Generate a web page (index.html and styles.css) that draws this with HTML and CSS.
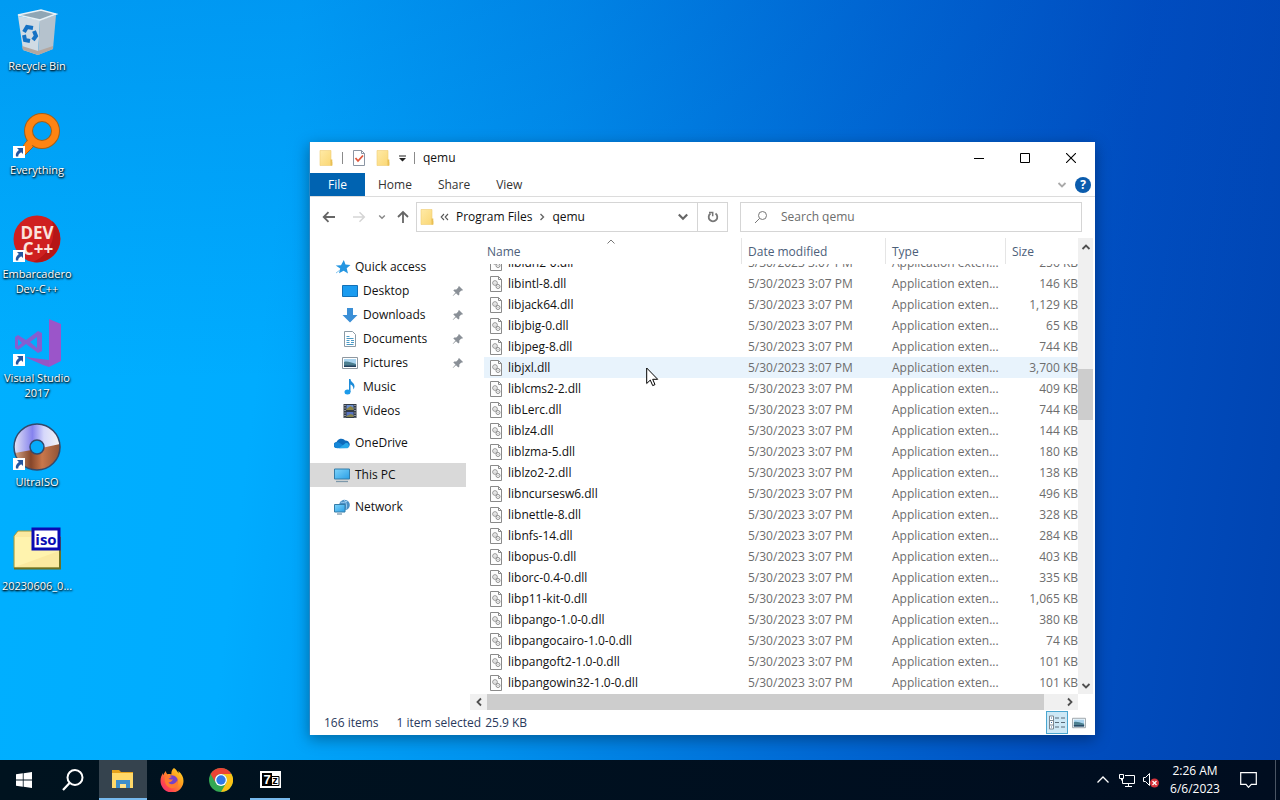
FILE: index.html
```html
<!DOCTYPE html>
<html lang="en">
<head>
  <meta charset="UTF-8">
  <meta name="viewport" content="width=device-width, initial-scale=1.0">
  <title>Desktop</title>
  <link rel="stylesheet" href="styles.css">
</head>
<body>
  <!-- Shared icons -->
  <svg class="sprite" aria-hidden="true">
    <defs>
      <linearGradient id="folder-fill" x1="0" y1="0" x2="1" y2="1">
        <stop offset="0" stop-color="#ffeaa6"/>
        <stop offset="1" stop-color="#fad672"/>
      </linearGradient>
      <linearGradient id="screen-fill" x1="0" y1="0" x2="1" y2="1">
        <stop offset="0" stop-color="#7fd4fb"/>
        <stop offset="1" stop-color="#2a9fe6"/>
      </linearGradient>
    </defs>
    <symbol id="folder" viewBox="0 0 16 16">
      <path d="M2 0.500h11v11l1 1v3H2z" fill="url(#folder-fill)" stroke="#f0cd74" stroke-width=".6"/>
      <path d="M12.500 9.500v6h1.800v-6z" fill="#e8bf55"/>
    </symbol>
    <symbol id="dll" viewBox="0 0 14 16">
      <path d="M1.500 .5h8l3 3v12h-11z" fill="#fdfdfd" stroke="#8a8a8a"/>
      <path d="M9.500 .5v3h3" fill="none" stroke="#8a8a8a"/>
      <circle cx="6" cy="7" r="2.300" fill="none" stroke="#8f8f8f"/>
      <circle cx="6" cy="7" r=".6" fill="#888"/>
      <circle cx="9" cy="10.500" r="2" fill="none" stroke="#8f8f8f"/>
      <circle cx="9" cy="10.500" r=".5" fill="#888"/>
    </symbol>
    <symbol id="pin" viewBox="0 0 12 12">
      <path d="M7 1l4 4-1 .8-.7-.2-2 2 .1 2-1 1L4 8.200 1 11l-.3-.3L3.500 7.600 1.300 5.400l1-1 2 .2 2-2L6.200 1.900z" fill="#8a9097"/>
    </symbol>
    <symbol id="down" viewBox="0 0 10 10">
      <path d="M1.500 3L5 6.500 8.500 3" fill="none" stroke="currentColor" stroke-width="1.800"/>
    </symbol>
    <symbol id="shortcut" viewBox="0 0 12 12">
      <path d="M0 0h12v12H0z" fill="#fff"/>
      <path d="M4 2h6v6L8.200 6.200C6 7.500 5 9 5.300 10.500H3C2.300 8 3.500 5.800 5.900 3.900z" fill="#2456a0"/>
    </symbol>
    <symbol id="picture" viewBox="0 0 16 14">
      <path d="M.5 1.500h15v11H.5z" fill="#fff" stroke="#8f98a0"/>
      <path d="M2 3h12v8H2z" fill="#a9d4ef"/>
      <path d="M2 6c3-1 6 0 12 2v3H2z" fill="#4d7f90"/>
      <path d="M2 9.500h12V11H2z" fill="#24415e"/>
    </symbol>
  </svg>

  <main class="desktop">
    <div class="shortcuts">
      <button class="shortcut">
        <svg class="shortcut-icon" viewBox="0 0 48 48">
          <path d="M5 9l22 4-2 35-15-5z" fill="#cfdbe4"/>
          <path d="M27 13l16-5-3 34-15 6z" fill="#b5c2cd"/>
          <path d="M5 8l23-5 15 4-16 6z" fill="#8fa6b5" stroke="#e8f1f6" stroke-width="1.500"/>
          <path d="M9 39l16 5 15-5v3l-15 6-15-5z" fill="#b3a7a0"/>
          <g fill="none" stroke="#1572c4" stroke-width="4">
            <path d="M11 25l3-5 6 1"/>
            <path d="M21 24l2 5-3 4"/>
            <path d="M17 34l-5-1-1-5"/>
          </g>
        </svg>
        <span>Recycle Bin</span>
      </button>
      <button class="shortcut">
        <svg class="shortcut-icon" viewBox="0 0 48 48">
          <path d="M16 27L5 42l5 4 14-14z" fill="#ff8412" stroke="#a0601c"/>
          <circle cx="29" cy="20" r="13.500" fill="none" stroke="#a0601c" stroke-width="9"/>
          <circle cx="29" cy="20" r="13.500" fill="none" stroke="#ff8412" stroke-width="7"/>
          <path d="M17 27l5 5-7 6-4-4z" fill="#ff8412"/>
          <use href="#shortcut" x="0" y="35" width="12" height="12"/>
        </svg>
        <span>Everything</span>
      </button>
      <button class="shortcut">
        <svg class="shortcut-icon" viewBox="0 0 48 48">
          <circle cx="24" cy="24" r="23.500" fill="#cf2020"/>
          <path d="M39 6a23.500 23.500 0 0 1-19 41C36 40 44 24 39 6z" fill="#b51616"/>
          <text class="dev-text" x="24" y="24">DEV</text>
          <text class="dev-text" x="25" y="40">C++</text>
          <use href="#shortcut" x="0" y="35" width="12" height="12"/>
        </svg>
        <span>Embarcadero Dev-C++</span>
      </button>
      <button class="shortcut">
        <svg class="shortcut-icon" viewBox="0 0 48 48">
          <path d="M36 0l12 5v37l-12 6z" fill="#9b55c9"/>
          <path d="M12 38l24 3v7l-6-2z" fill="#9556c5"/>
          <path d="M2 18l3-2 8 5 12-9 4 2v18l-4 2-12-9-8 6-3-2zM5 20v7l4-3zM24 18l-7 5 7 6z" fill="#855ed0" fill-rule="evenodd"/>
          <use href="#shortcut" x="0" y="35" width="12" height="12"/>
        </svg>
        <span>Visual Studio 2017</span>
      </button>
      <button class="shortcut">
        <svg class="shortcut-icon" viewBox="0 0 48 48">
          <defs>
            <linearGradient id="disc-top" x1="0" y1="0" x2="1" y2="0">
              <stop offset="0" stop-color="#e4e4f5"/>
              <stop offset=".4" stop-color="#8582ee"/>
              <stop offset=".65" stop-color="#d6d8fb"/>
              <stop offset="1" stop-color="#f4f4f4"/>
            </linearGradient>
            <linearGradient id="disc-bottom" x1="0" y1="0" x2="1" y2="0">
              <stop offset="0" stop-color="#d3a384"/>
              <stop offset=".35" stop-color="#86462a"/>
              <stop offset=".6" stop-color="#c9774b"/>
              <stop offset="1" stop-color="#8f5337"/>
            </linearGradient>
          </defs>
          <circle cx="24" cy="24" r="23" fill="url(#disc-top)"/>
          <path d="M2 30l22-4 23-5a23 23 0 0 1-45 9z" fill="url(#disc-bottom)"/>
          <circle cx="24" cy="24" r="23" fill="none" stroke="#33496b" stroke-width="1.500"/>
          <circle cx="24" cy="24" r="7" fill="#05abfb" stroke="#33496b" stroke-width="1.500"/>
          <use href="#shortcut" x="0" y="35" width="12" height="12"/>
        </svg>
        <span>UltraISO</span>
      </button>
      <button class="shortcut">
        <svg class="shortcut-icon" viewBox="0 0 48 48">
          <path d="M1 9l4-5h14l3 5h25v32H1z" fill="#fbe9a0" stroke="#a39a3c"/>
          <path d="M2 10h44v14L2 40z" fill="#fff3ae"/>
          <path d="M47 10v31.500H1" fill="none" stroke="#6c7024" stroke-width="2"/>
          <path d="M20 2h26v20H20z" fill="#fff" stroke="#0a0ab4" stroke-width="3"/>
          <text class="iso-text" x="33" y="18">iso</text>
        </svg>
        <span>20230606_0...</span>
      </button>
    </div>

    <section class="window">
      <header class="title-bar">
        <svg class="icon" viewBox="0 0 16 16"><use href="#folder"/></svg>
        <i class="divider"></i>
        <svg class="icon" viewBox="0 0 16 16">
          <path d="M2.500 .5h8l3 3v12h-11z" fill="#fff" stroke="#8b95a3"/>
          <path d="M10.500 .5v3h3" fill="none" stroke="#8b95a3"/>
          <path d="M4.500 8l2.500 3L12 5.500" fill="none" stroke="#e0563c" stroke-width="1.800"/>
        </svg>
        <svg class="icon" viewBox="0 0 16 16"><use href="#folder"/></svg>
        <button class="customize" aria-label="Customize toolbar">
          <svg width="8" height="8" viewBox="0 0 8 8"><path d="M0 1h8v1.200H0zM0 4h8L4 8z" fill="#222"/></svg>
        </button>
        <i class="divider"></i>
        <h1>qemu</h1>
        <div class="window-controls">
          <button aria-label="Minimize"><svg width="10" height="10" viewBox="0 0 10 10"><path d="M0 5.500h10" stroke="#000"/></svg></button>
          <button aria-label="Maximize"><svg width="10" height="10" viewBox="0 0 10 10"><path d="M.5 .5h9v9h-9z" fill="none" stroke="#000"/></svg></button>
          <button aria-label="Close"><svg width="10" height="10" viewBox="0 0 10 10"><path d="M0 0l10 10M10 0L0 10" stroke="#000" stroke-width="1.100"/></svg></button>
        </div>
      </header>

      <nav class="ribbon">
        <button class="file">File</button>
        <button>Home</button>
        <button>Share</button>
        <button>View</button>
        <div class="ribbon-end">
          <button aria-label="Expand ribbon"><svg width="10" height="10"><use href="#down"/></svg></button>
          <button class="help" aria-label="Help">?</button>
        </div>
      </nav>

      <div class="address-row">
        <div class="history">
          <button aria-label="Back"><svg width="14" height="12" viewBox="0 0 14 12"><path d="M13 6H2M6.500 1.200L1.700 6l4.800 4.800" fill="none" stroke="#666" stroke-width="1.800"/></svg></button>
          <button class="forward" aria-label="Forward"><svg width="14" height="12" viewBox="0 0 14 12"><path d="M1 6h11M7.500 1.200L12.300 6l-4.800 4.800" fill="none" stroke="#d5d5d5" stroke-width="1.500"/></svg></button>
          <button class="recent" aria-label="Recent locations"><svg width="8" height="8"><use href="#down"/></svg></button>
          <button class="up" aria-label="Up"><svg width="12" height="14" viewBox="0 0 12 14"><path d="M6 13V2M1 7l5-5 5 5" fill="none" stroke="#666" stroke-width="1.800"/></svg></button>
        </div>
        <div class="address">
          <svg class="icon" viewBox="0 0 16 16"><use href="#folder"/></svg>
          <svg class="crumb-more" width="9" height="8" viewBox="0 0 9 8"><path d="M4 1L1.200 4 4 7M8 1L5.200 4 8 7" fill="none" stroke="#555" stroke-width="1.100"/></svg>
          <button>Program Files</button>
          <svg width="6" height="8" viewBox="0 0 6 8"><path d="M1.500 1L4.500 4l-3 3" fill="none" stroke="#666" stroke-width="1.400"/></svg>
          <button>qemu</button>
          <button class="address-drop" aria-label="Previous locations"><svg width="12" height="12"><use href="#down"/></svg></button>
          <button class="refresh" aria-label="Refresh">
            <svg width="12" height="12" viewBox="0 0 12 12"><path d="M3.500 2.600A4.300 4.300 0 1 0 8.500 2.600" fill="none" stroke="#777" stroke-width="1.800"/><path d="M2 1.500h3.700v3.700" fill="none" stroke="#777" stroke-width="1.500"/></svg>
          </button>
        </div>
        <label class="search">
          <svg width="14" height="14" viewBox="0 0 14 14"><circle cx="8.500" cy="5.500" r="4" fill="none" stroke="#777"/><path d="M5.500 8.500L1 13" stroke="#777"/></svg>
          <input type="search" placeholder="Search qemu" aria-label="Search qemu">
        </label>
      </div>

      <div class="content">
        <nav class="places">
          <a href="#"><svg class="icon" viewBox="0 0 16 16"><path d="M8.800 1l1.700 4.500 5 .4-3.800 3.300 1.300 5.200-4.400-2.700-4.600 2.600 1.200-4.700-4.500-3 5.300-.4z" fill="#2596e1"/><path d="M1 14l4-3" stroke="#84c6f0"/></svg>Quick access</a>
          <a class="sub" href="#"><svg class="icon" viewBox="0 0 16 16"><path d="M.5 2.500h15v11H.5z" fill="#1b9cf0" stroke="#1271b8"/></svg>Desktop<svg class="pin"><use href="#pin"/></svg></a>
          <a class="sub" href="#"><svg class="icon" viewBox="0 0 16 16"><path d="M5 1h6v7h4.500L8 15.500.5 8H5z" fill="#3b8fd6"/></svg>Downloads<svg class="pin"><use href="#pin"/></svg></a>
          <a class="sub" href="#"><svg class="icon" viewBox="0 0 16 16"><path d="M2.500 .5h8l3 3v12h-11z" fill="#fff" stroke="#8b9aa5"/><path d="M4.500 5.500h3M4.500 7.500h7M4.500 9.500h3M9 9.500h3M4.500 11.500h3M9 11.500h3M4.500 13.500h7" stroke="#4c9ac5"/></svg>Documents<svg class="pin"><use href="#pin"/></svg></a>
          <a class="sub" href="#"><svg class="icon"><use href="#picture" y="1" width="16" height="14"/></svg>Pictures<svg class="pin"><use href="#pin"/></svg></a>
          <a class="sub" href="#"><svg class="icon" viewBox="0 0 16 16"><path d="M7 0h1.500c0 3 4 3.500 4 7.500 0 1-.5 2-1 3C11.500 7.500 10 6 8.500 5.500V13H7z" fill="#1c8bd8"/><ellipse cx="5.500" cy="13" rx="3" ry="2.500" fill="#1c9bea"/></svg>Music</a>
          <a class="sub" href="#"><svg class="icon" viewBox="0 0 16 16"><path d="M1.500 1h13v14h-13z" fill="#333b46"/><path d="M4.500 2h7v5h-7z" fill="#6c8fd0"/><path d="M4.500 6l4-3 3 2v2h-7z" fill="#8d8545"/><path d="M4.500 9h7v5h-7z" fill="#5873c0"/><path d="M4.500 13l4-2 3 1v2h-7z" fill="#85834a"/><path d="M3 2v13M13 2v13" stroke="#dfe3e8" stroke-dasharray="1 1.500"/></svg>Videos</a>
          <a class="drive" href="#"><svg class="icon" viewBox="0 0 16 16"><path d="M3 13a3 3 0 0 1-.5-6A5 5 0 0 1 11 5.500 4 4 0 0 1 13.500 13z" fill="#0f6cbc"/><path d="M3 13.300A3 3 0 0 1 2 7.500c2-1 4 0 10 5.500z" fill="#1587d8"/><path d="M5 13.300l7-5.600a3 3 0 0 1 1.500 5.600z" fill="#28a8ea"/></svg>OneDrive</a>
          <a class="drive selected" href="#"><svg class="icon" viewBox="0 0 16 16"><path d="M.5 2h15v10H.5z" fill="url(#screen-fill)" stroke="#357ca8"/><path d="M2 14.500h12" stroke="#7d98aa" stroke-width="1.300"/></svg>This PC</a>
          <a class="drive" href="#"><svg class="icon" viewBox="0 0 16 16"><circle cx="10.500" cy="6" r="5.300" fill="#4a8fc4"/><path d="M6.500 3c3 1 5 0 7-1M10 .8c3 3 3 7 2 10" fill="none" stroke="#9fd0f2"/><path d="M.5 5.500h10.500V13H.5z" fill="url(#screen-fill)" stroke="#357ca8"/><path d="M3 15h5" stroke="#7d98aa" stroke-width="1.300"/></svg>Network</a>
        </nav>

        <div class="files">
          <div class="file-list">
            <table>
              <thead>
                <tr>
                  <th class="name">Name<svg class="sort" width="8" height="5" viewBox="0 0 8 5"><path d="M.5 4.500L4 1l3.500 3.500" fill="none" stroke="#777"/></svg></th>
                  <th class="date">Date modified</th>
                  <th class="type">Type</th>
                  <th class="size">Size</th>
                </tr>
              </thead>
              <tbody id="rows"></tbody>
            </table>
          </div>
          <div class="scroll-y">
            <button aria-label="Scroll up"><svg class="flip" width="10" height="10"><use href="#down"/></svg></button>
            <div class="track"><div class="thumb"></div></div>
            <button aria-label="Scroll down"><svg width="10" height="10"><use href="#down"/></svg></button>
          </div>
          <div class="scroll-x">
            <button aria-label="Scroll left"><svg class="turn-left" width="10" height="10"><use href="#down"/></svg></button>
            <div class="track"><div class="thumb"></div></div>
            <button aria-label="Scroll right"><svg class="turn-right" width="10" height="10"><use href="#down"/></svg></button>
          </div>
        </div>
      </div>

      <footer class="status-bar">
        <span class="total">166 items</span>
        <span class="chosen">1 item selected</span>
        <span>25.9 KB</span>
        <div class="views">
          <button class="active" aria-label="Details view">
            <svg width="16" height="14" viewBox="0 0 16 14"><path d="M.5 .5h4v13h-4zM.5 5h4M.5 9.500h4" fill="#fff" stroke="#7d8790"/><path d="M2 2.500h1M2 7h1M2 11.500h1" stroke="#3c6ea5"/><path d="M6 2.500h4M12 2.500h4M6 7h4M12 7h4M6 11.500h4M12 11.500h4" stroke="#5a6b78"/></svg>
          </button>
          <button aria-label="Large icons view"><svg width="14" height="12"><use href="#picture"/></svg></button>
        </div>
      </footer>
    </section>

    <svg class="cursor" width="13" height="20" viewBox="0 0 13 20"><path d="M.7 1v15.500l3.600-3.400 2.400 5.500 2.300-1-2.300-5.300h5z" fill="#fff" stroke="#000"/></svg>
  </main>

  <footer class="taskbar">
    <button aria-label="Start"><svg width="16" height="16" viewBox="0 0 16 16"><path d="M0 2.300L6.800 1.300V7.600H0zM7.600 1.200L16 0v7.600H7.600zM0 8.400h6.800v6.300L0 13.700zM7.600 8.400H16V16l-8.400-1.200z" fill="#fff"/></svg></button>
    <button aria-label="Search"><svg width="24" height="24" viewBox="0 0 24 24"><circle cx="14" cy="9.500" r="7.500" fill="none" stroke="#fff" stroke-width="2"/><path d="M8.600 15L2 22" stroke="#fff" stroke-width="2.200"/></svg></button>
    <button class="open current" aria-label="File Explorer">
      <svg width="24" height="24" viewBox="0 0 24 24"><path d="M1 3h7l2 2h12v4H1z" fill="#e5a21c"/><path d="M1 6h21v15H1z" fill="#ffd868"/><path d="M5 13h14v8h-4v-4H9v4H5z" fill="#3e8ecb"/><path d="M9 17h6v3.500H9z" fill="#ffe28c"/></svg>
    </button>
    <button aria-label="Firefox">
      <svg width="24" height="24" viewBox="0 0 24 24">
        <defs><linearGradient id="fox" x1="1" y1="0" x2="0" y2="1"><stop offset="0" stop-color="#ffe226"/><stop offset=".4" stop-color="#ff9a1f"/><stop offset=".75" stop-color="#ff4350"/><stop offset="1" stop-color="#e62590"/></linearGradient></defs>
        <path d="M14 0c3 2 3.500 4 4.500 5.500 0-1 0-1.500-.2-2.500C22 6 23.500 9 23.500 13A11.500 11.500 0 0 1 .5 13c0-3 .8-5.500 2.500-8 0 1 0 1.500.4 2.300C4 5 5 4 6 3c0 1.500.3 2.300 1.500 3.200 2-.4 3.500 0 4 .3C11 4 12 1.500 14 0z" fill="url(#fox)"/>
        <circle cx="12" cy="13" r="5.800" fill="#7542c8"/>
        <path d="M5 9c2-2 4-1.500 7 0-2 .5-2.500 1.200-3.500 2 1 .5 3 .6 4.500.2-1 2.500-3 3-4.500 3.300C10 17 15 17 17.500 12c2 6-3 9-7 8C6 18.500 4 14 5 9z" fill="#ff7a30"/>
      </svg>
    </button>
    <button aria-label="Chrome">
      <svg width="24" height="24" viewBox="0 0 24 24">
        <circle cx="12" cy="12" r="12" fill="#34a853"/>
        <path d="M1.600 6A12 12 0 0 1 22.400 6H12a6 6 0 0 0-5.200 9z" fill="#ea4335"/>
        <path d="M22.400 6A12 12 0 0 1 12 24l5.200-9A6 6 0 0 0 12 6z" fill="#fbc116"/>
        <circle cx="12" cy="12" r="6" fill="#fff"/>
        <circle cx="12" cy="12" r="4.700" fill="#2f79e8"/>
      </svg>
    </button>
    <button class="open" aria-label="7-Zip">
      <svg width="21" height="17" viewBox="0 0 21 17"><path d="M0 0h21v17H0z" fill="#fff"/><path d="M2 2h10v13H2z" fill="#000"/><path d="M12 5.500h7v9h-7" fill="none" stroke="#000"/><text class="zip-seven" x="7" y="13">7</text><text class="zip-z" x="15" y="13">z</text></svg>
    </button>

    <div class="tray">
      <button aria-label="Show hidden icons"><svg width="12" height="8" viewBox="0 0 12 8"><path d="M.5 6.500L6 1l5.500 5.500" fill="none" stroke="#fff" stroke-width="1.300"/></svg></button>
      <button aria-label="Network"><svg width="16" height="14" viewBox="0 0 16 14"><path d="M6 2.500h9.500v8H3.500V6M9.500 10.500v3M6 13.500h7M.5 1.500h4v4h-4zM2.500 5.500v2" fill="none" stroke="#fff"/></svg></button>
      <button aria-label="Volume muted"><svg width="16" height="16" viewBox="0 0 16 16"><path d="M.5 5.500h2l4-4v12l-4-4h-2z" fill="none" stroke="#fff"/><circle cx="11.500" cy="11" r="4.500" fill="#d5333b"/><path d="M9.500 9l4 4M13.500 9l-4 4" stroke="#fff" stroke-width="1.200"/></svg></button>
      <button class="clock"><span>2:26 AM</span><span>6/6/2023</span></button>
      <button class="notifications" aria-label="Notifications"><svg width="17" height="16" viewBox="0 0 17 16"><path d="M.7 .7h15.600v11.600h-5L8.500 15.300 6 12.300H.7z" fill="none" stroke="#fff" stroke-width="1.200"/></svg></button>
      <button class="show-desktop" aria-label="Show desktop"></button>
    </div>
  </footer>

  <script src="script.js"></script>
</body>
</html>
```

FILE: styles.css
```css
* {
  margin: 0;
  padding: 0;
  box-sizing: border-box;
}
body {
  display: flex;
  flex-direction: column;
  height: 100vh;
  overflow: hidden;
  font-family: "Open Sans", "Noto Sans", sans-serif;
  font-size: 12px;
  line-height: 16px;
  color: #111;
}
button {
  border: none;
  background: none;
  font: inherit;
  color: inherit;
}
a {
  color: inherit;
  text-decoration: none;
}
svg {
  display: block;
  flex-shrink: 0;
}
.sprite {
  position: absolute;
  width: 0;
  height: 0;
}
.icon {
  width: 16px;
  height: 16px;
}

/* Desktop */
.desktop {
  position: relative;
  flex: 1;
  min-height: 0;
  background:
    linear-gradient(to bottom, rgba(0, 70, 190, 0.2), rgba(0, 70, 190, 0) 50%),
    linear-gradient(97deg, #00b0ff 0%, #00acff 22%, #0092ee 42%, #006cd6 64%, #004ec0 84%, #0043b0 100%);
}
.shortcuts {
  display: flex;
  flex-direction: column;
  width: 74px;
}
.shortcut {
  display: flex;
  flex-direction: column;
  align-items: center;
  gap: 3px;
  height: 104px;
  padding-top: 7px;
  line-height: 15px;
  font-size: 11px;
  color: #fff;
  text-shadow: 0 1px 2px #000, 1px 1px 2px rgba(0, 0, 0, 0.8);
}
.shortcut-icon {
  width: 48px;
  height: 48px;
}
.dev-text {
  font: bold 17px "Open Sans", sans-serif;
  text-anchor: middle;
  text-shadow: none;
  fill: #fbe3dd;
}
.iso-text {
  font: bold 15px "Open Sans", sans-serif;
  text-anchor: middle;
  text-shadow: none;
  fill: #0a0ab4;
}

/* Explorer window */
.window {
  position: absolute;
  left: 309px;
  top: 142px;
  width: 786px;
  height: 593px;
  display: flex;
  flex-direction: column;
  background-color: #fff;
  border-left: 1px solid #2a86c4;
  box-shadow: 0 4px 14px rgba(0, 0, 0, 0.35);
}
.title-bar {
  display: flex;
  align-items: center;
  height: 31px;
  padding: 0 1px 0 8px;
  gap: 8px;
}
.title-bar h1 {
  font-size: 12px;
  font-weight: normal;
}
.divider {
  width: 1px;
  height: 12px;
  background-color: #8a8a8a;
}
.customize svg {
  width: 7px;
}
.window-controls {
  display: flex;
  align-self: stretch;
  margin-left: auto;
}
.window-controls button {
  display: flex;
  align-items: center;
  justify-content: center;
  width: 46px;
}
.ribbon {
  display: flex;
  height: 24px;
  border-bottom: 1px solid #dcdcdc;
  color: #333;
}
.ribbon > button {
  padding: 0 13px;
}
.ribbon .file {
  padding: 0 18px;
  background-color: #0063b1;
  color: #fff;
}
.ribbon-end {
  display: flex;
  align-items: center;
  gap: 8px;
  margin-left: auto;
  padding-right: 4px;
  color: #aaa;
}
.help {
  width: 16px;
  height: 16px;
  border-radius: 50%;
  background-color: #0b5cad;
  color: #fff;
  font-weight: bold;
}
.address-row {
  display: flex;
  height: 41px;
  padding: 5px 13px 6px 0;
}
.history {
  display: flex;
  align-items: center;
  width: 106px;
  padding-left: 12px;
}
.history button {
  margin-right: 16px;
}
.history .forward {
  margin-right: 12px;
}
.history .recent {
  margin-right: 11px;
  color: #888;
}
.history .up {
  margin-right: 0;
}
.address {
  display: flex;
  flex: 1 1 312px;
  align-items: center;
  padding-left: 2px;
  border: 1px solid #d5d5d5;
}
.address > button {
  margin: 0 7px;
}
.address .crumb-more {
  margin-left: 5px;
}
.address .address-drop {
  margin: 0 8px 0 auto;
  color: #666;
}
.address .refresh {
  display: flex;
  align-items: center;
  justify-content: center;
  align-self: stretch;
  width: 30px;
  margin: 0;
  border-left: 1px solid #d5d5d5;
}
.search {
  display: flex;
  flex: 1 1 342px;
  align-items: center;
  gap: 13px;
  margin-left: 12px;
  padding-left: 13px;
  border: 1px solid #d5d5d5;
}
.search input {
  flex: 1;
  min-width: 0;
  border: none;
  outline: none;
  font: inherit;
}
.search input::placeholder {
  color: #6d6d6d;
}

/* Places and file list */
.content {
  display: flex;
  flex: 1;
  min-height: 0;
}
.places {
  width: 160px;
  padding: 17px 4px 0 0;
}
.places a {
  display: flex;
  align-items: center;
  height: 24px;
  padding-left: 25px;
  gap: 4px;
}
.places .sub {
  padding-left: 32px;
  gap: 5px;
}
.places .drive {
  margin-top: 8px;
  padding-left: 24px;
  gap: 5px;
}
.places .selected {
  background-color: #d9d9d9;
}
.places .pin {
  width: 12px;
  height: 12px;
  margin-left: auto;
  margin-right: 2px;
}
.files {
  display: grid;
  flex: 1;
  grid-template-columns: 1fr 15px;
  grid-template-rows: 1fr 16px;
  min-width: 0;
  min-height: 0;
  padding-right: 2px;
}
.file-list {
  overflow: hidden;
  min-height: 0;
  padding-left: 14px;
}
.file-list table {
  width: 100%;
  table-layout: fixed;
  border-spacing: 0;
}
.file-list th {
  position: sticky;
  top: 0;
  height: 26px;
  padding: 2px 0 0 6px;
  background-color: #fff;
  border-left: 1px solid #e5e5e5;
  color: #4c607a;
  font-weight: normal;
  text-align: left;
}
.file-list th.name {
  padding-left: 3px;
  border-left: none;
}
.date {
  width: 144px;
}
.type {
  width: 120px;
}
.size {
  width: 73px;
}
.sort {
  position: absolute;
  top: 1px;
  left: 48%;
}
.file-list td {
  height: 21px;
  padding-left: 7px;
  color: #6d6d6d;
  white-space: nowrap;
}
.file-list td:first-child {
  padding-left: 5px;
  color: #111;
}
.file-list td:last-child {
  padding-left: 0;
  text-align: right;
}
.file-name {
  display: flex;
  align-items: center;
  gap: 5px;
}
.file-name svg {
  width: 14px;
  height: 16px;
}
.hovered td {
  background-color: #e8f3fc;
}
.scroll-y,
.scroll-x {
  display: flex;
  background-color: #f0f0f0;
  color: #505050;
}
.scroll-y {
  flex-direction: column;
}
.scroll-y button,
.scroll-x button {
  display: flex;
  align-items: center;
  justify-content: center;
  width: 17px;
  height: 17px;
}
.scroll-x button {
  height: 16px;
}
.scroll-y button {
  width: 15px;
}
.track {
  display: flex;
  flex: 1;
}
.scroll-y .track {
  flex-direction: column;
  padding-top: 114px;
}
.thumb {
  background-color: #cdcdcd;
}
.scroll-y .thumb {
  height: 51px;
}
.scroll-x .thumb {
  width: 97%;
}
.flip {
  transform: rotate(180deg);
}
.turn-left {
  transform: rotate(90deg);
}
.turn-right {
  transform: rotate(-90deg);
}

/* Status bar */
.status-bar {
  display: flex;
  align-items: center;
  height: 25px;
  padding: 0 9px 0 14px;
  color: #29395c;
}
.total {
  margin-right: 18px;
}
.chosen {
  margin-right: 4px;
}
.views {
  display: flex;
  align-items: center;
  gap: 4px;
  margin-left: auto;
}
.views .active {
  padding: 3px 2px;
  border: 1px solid #4aa6d0;
  background-color: #cde8f6;
}
.views .active svg {
  height: 15px;
}
.cursor {
  position: absolute;
  left: 646px;
  top: 367px;
}

/* Taskbar */
.taskbar {
  display: flex;
  height: 40px;
  background: linear-gradient(to right, #00131f, #000d20);
  color: #fff;
}
.taskbar button {
  display: flex;
  align-items: center;
  justify-content: center;
}
.taskbar > button {
  width: 48px;
  margin-right: 1px;
}
.taskbar > .open {
  border-bottom: 2px solid #76b9ed;
}
.taskbar > .current {
  margin-left: 1px;
  background-color: #35434e;
}
.taskbar > .open:not(.current) {
  width: 40px;
  margin-left: 4px;
}
.zip-seven {
  font: bold 13px "Liberation Sans", sans-serif;
  text-anchor: middle;
  fill: #fff;
}
.zip-z {
  font: bold 11px "Liberation Sans", sans-serif;
  text-anchor: middle;
  fill: #000;
}
.tray {
  display: flex;
  margin-left: auto;
}
.tray > button {
  width: 24px;
}
.tray .clock {
  flex-direction: column;
  width: 64px;
  line-height: 18px;
}
.tray .notifications {
  width: 42px;
}
.tray .show-desktop {
  width: 5px;
  margin-left: 6px;
  border-left: 1px solid #4a5564;
}
```

FILE: script.js
```js
const files = [
  ['libidn2-0.dll', '256 KB'],
  ['libintl-8.dll', '146 KB'],
  ['libjack64.dll', '1,129 KB'],
  ['libjbig-0.dll', '65 KB'],
  ['libjpeg-8.dll', '744 KB'],
  ['libjxl.dll', '3,700 KB'],
  ['liblcms2-2.dll', '409 KB'],
  ['libLerc.dll', '744 KB'],
  ['liblz4.dll', '144 KB'],
  ['liblzma-5.dll', '180 KB'],
  ['liblzo2-2.dll', '138 KB'],
  ['libncursesw6.dll', '496 KB'],
  ['libnettle-8.dll', '328 KB'],
  ['libnfs-14.dll', '284 KB'],
  ['libopus-0.dll', '403 KB'],
  ['liborc-0.4-0.dll', '335 KB'],
  ['libp11-kit-0.dll', '1,065 KB'],
  ['libpango-1.0-0.dll', '380 KB'],
  ['libpangocairo-1.0-0.dll', '74 KB'],
  ['libpangoft2-1.0-0.dll', '101 KB'],
  ['libpangowin32-1.0-0.dll', '101 KB']
];

// Fill the file list
document.getElementById('rows').innerHTML = files.map(([name, size]) => `
  <tr class="${name === 'libjxl.dll' ? 'hovered' : ''}">
    <td><div class="file-name"><svg><use href="#dll"/></svg>${name}</div></td>
    <td>5/30/2023 3:07 PM</td>
    <td>Application exten...</td>
    <td>${size}</td>
  </tr>`).join('') + '<tr><td colspan="4"></td></tr>';

// Start part of the way down the list
document.querySelector('.file-list').scrollTop = 12;
```
